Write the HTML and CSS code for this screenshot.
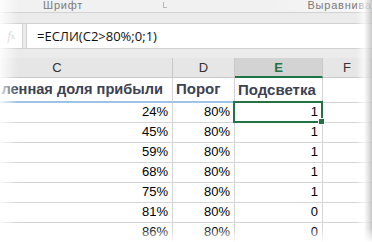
FILE: index.html
```html
<!DOCTYPE html>
<html lang="ru">
<head>
<meta charset="utf-8">
<link rel="stylesheet" href="styles.css">
</head>
<body>
<div class="shot">
  <div class="ribbon">
    <span class="grp grp-font">Шрифт</span>
    <span class="launcher"></span>
    <span class="grp grp-align">Выравнива</span>
  </div>
  <div class="band"></div>
  <div class="fbar">
    <div class="fx"><i>f</i><sub>x</sub></div>
    <div class="formula">=ЕСЛИ(C2&gt;80%;0;1)</div>
  </div>
  <div class="gap"></div>
  <div class="grid">
    <div class="ch ch-c">C</div><div class="ch">D</div><div class="ch ch-sel">E</div><div class="ch">F</div>

    <div class="c th tbl">ленная доля прибыли</div><div class="c th tbl th-left">Порог</div><div class="c th th-left">Подсветка</div><div class="c"></div>

    <div class="c num">24%</div><div class="c num">80%</div><div class="c num active">1</div><div class="c"></div>
    <div class="c num">45%</div><div class="c num">80%</div><div class="c num">1</div><div class="c"></div>
    <div class="c num">59%</div><div class="c num">80%</div><div class="c num">1</div><div class="c"></div>
    <div class="c num">68%</div><div class="c num">80%</div><div class="c num">1</div><div class="c"></div>
    <div class="c num">75%</div><div class="c num">80%</div><div class="c num">1</div><div class="c"></div>
    <div class="c num">81%</div><div class="c num">80%</div><div class="c num">0</div><div class="c"></div>
    <div class="c num">86%</div><div class="c num">80%</div><div class="c num">0</div><div class="c"></div>
  </div>
  <div class="fade fade-left"></div>
  <div class="fade fade-right"></div>
  <div class="fade fade-bottom"></div>
</div>
</body>
</html>
```

FILE: styles.css
```css
html, body {
  margin: 0;
  padding: 0;
  background: #ffffff;
}
.shot {
  position: relative;
  width: 372px;
  height: 242px;
  overflow: hidden;
  font-family: "Liberation Sans", Arial, sans-serif;
  background: #ffffff;
}
.ribbon {
  height: 12px;
  background: linear-gradient(to right, #f1f1f1 70%, #f7f7f7);
  border-bottom: 1px solid #d2d2d2;
  display: flex;
  align-items: flex-start;
  overflow: hidden;
}
.grp {
  font-size: 11px;
  line-height: 11px;
  color: #7a7a7a;
  letter-spacing: 0.8px;
  white-space: nowrap;
}
.grp-font {
  margin-left: 43px;
}
.launcher {
  width: 5px;
  height: 5px;
  border: 1px solid #b8b8b8;
  border-top: none;
  border-right: none;
  margin-left: 80px;
  margin-top: 2px;
}
.grp-align {
  margin-left: 140px;
}
.band {
  height: 10px;
  background: #ebebeb;
  border-bottom: 1px solid #d0d0d0;
}
.fbar {
  height: 24px;
  display: flex;
  background: #ebebeb;
  border-bottom: 1px solid #d0d0d0;
}
.fx {
  width: 22px;
  background: #ffffff;
  color: #c4c4c4;
  font-family: "Liberation Serif", serif;
  font-size: 13px;
  display: flex;
  align-items: center;
  justify-content: center;
  border-right: 1px solid #d0d0d0;
}
.fx sub {
  font-size: 8px;
}
.formula {
  flex: 1;
  margin-left: 3px;
  background: #ffffff;
  border-left: 1px solid #d0d0d0;
  font-family: "Open Sans", "Liberation Sans", sans-serif;
  font-size: 13px;
  color: #111111;
  padding-left: 10px;
  display: flex;
  align-items: center;
}
.gap {
  height: 9px;
  background: #ebebeb;
}
.grid {
  display: grid;
  margin-left: -58px;
  grid-template-columns: 231px 62px 88px 1fr;
  grid-template-rows: 20px 25px repeat(7, 20px);
}
.ch {
  background: #e6e6e6;
  border-right: 1px solid #c8c8c8;
  border-bottom: 1px solid #c8c8c8;
  font-size: 13px;
  color: #333333;
  display: flex;
  align-items: center;
  justify-content: center;
}
.ch-sel {
  background: #d3d3d3;
  color: #217346;
  font-weight: bold;
  border-bottom: 2px solid #217346;
}
.c {
  border-right: 1px solid #d4d4d4;
  border-bottom: 1px solid #d4d4d4;
  display: flex;
  align-items: flex-end;
  padding: 0 4px 3px 4px;
  white-space: nowrap;
  overflow: hidden;
  position: relative;
}
.th {
  font-weight: bold;
  font-size: 15px;
  color: #3c4250;
  padding-bottom: 4px;
}
.tbl {
  justify-content: flex-end;
  border-bottom: 2px solid #9dc3e6;
  padding-right: 9px;
}
.tbl:first-child,
.th.tbl:nth-child(5) {
  font-size: 14.6px;
}
.th-left {
  justify-content: flex-start;
  padding-left: 3px;
}
.num {
  justify-content: flex-end;
  font-size: 13px;
  color: #000000;
}
.active {
  overflow: visible;
}
.active::after {
  content: "";
  position: absolute;
  left: -2px;
  top: -2px;
  right: -1px;
  bottom: -1px;
  border: 2px solid #217346;
}
.active::before {
  content: "";
  position: absolute;
  right: -3px;
  bottom: -3px;
  width: 5px;
  height: 5px;
  background: #217346;
  border: 1px solid #ffffff;
  z-index: 2;
}
.fade {
  position: absolute;
  pointer-events: none;
}
.fade-left {
  left: 0;
  top: 0;
  bottom: 0;
  width: 18px;
  background: linear-gradient(to right, rgba(255,255,255,0.85), rgba(255,255,255,0));
}
.fade-right {
  right: 0;
  top: 0;
  bottom: 0;
  width: 16px;
  background: linear-gradient(to right, rgba(255,255,255,0), rgba(255,255,255,0.7) 50%, rgba(190,190,190,0.8));
}
.fade-bottom {
  left: 0;
  right: 0;
  bottom: 0;
  height: 14px;
  background: linear-gradient(to bottom, rgba(255,255,255,0), rgba(255,255,255,0.95));
}
```
